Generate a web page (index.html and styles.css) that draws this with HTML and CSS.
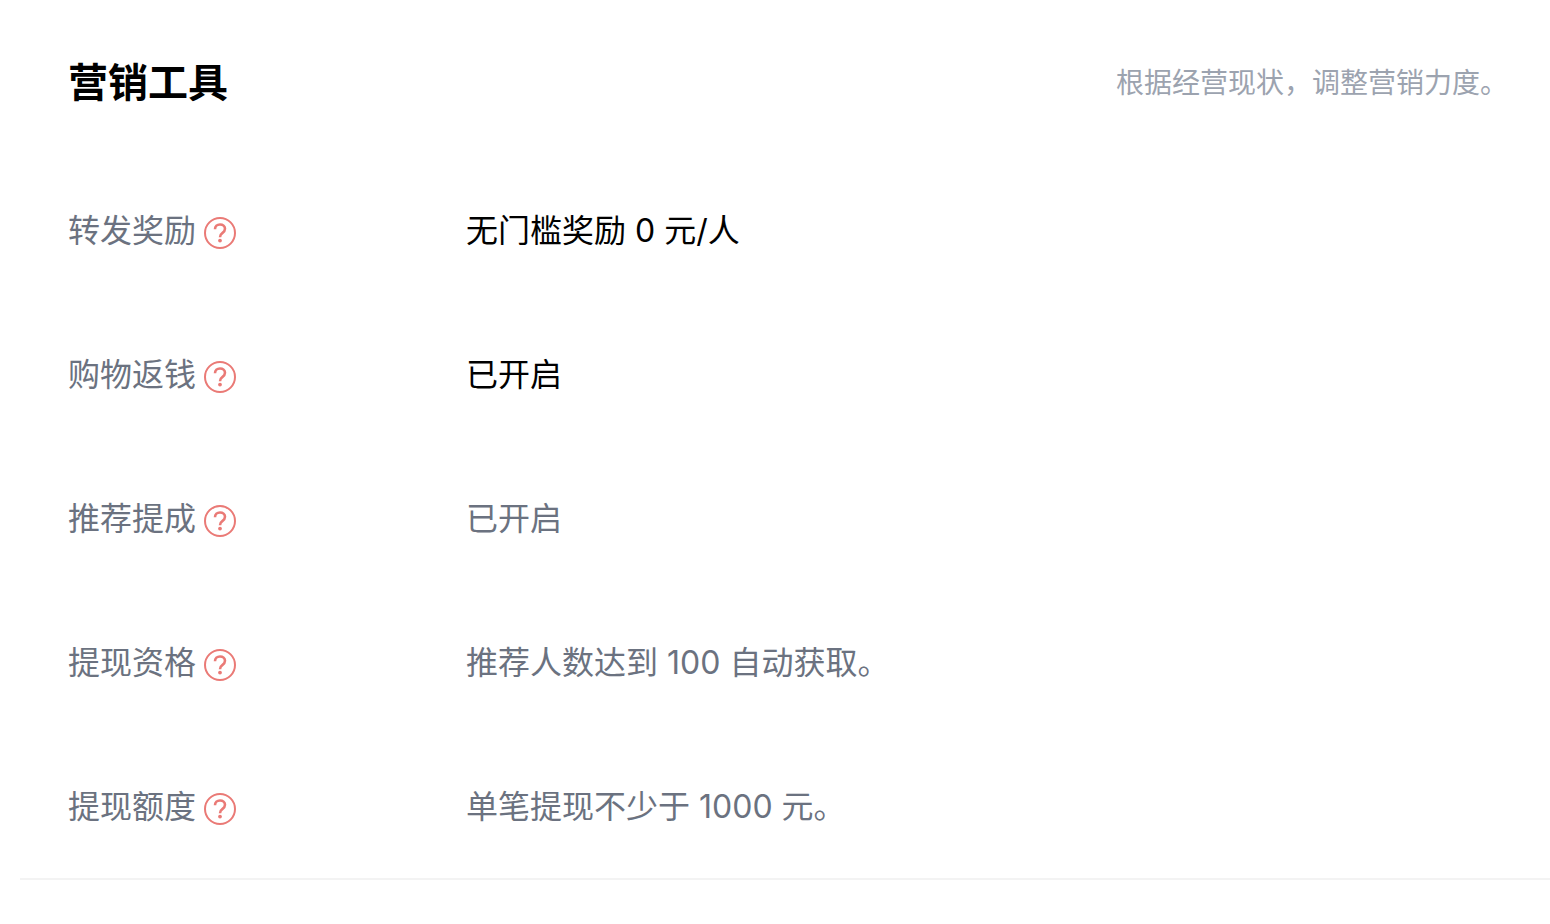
FILE: index.html
```html
<!DOCTYPE html>
<html lang="zh-CN">
<head>
<meta charset="utf-8">
<meta name="viewport" content="width=device-width, initial-scale=1">
<title>营销工具</title>
<link rel="stylesheet" href="styles.css">
</head>
<body>
<svg class="defs" aria-hidden="true">
  <symbol id="help" viewBox="0 0 32 32">
    <circle cx="16" cy="16" r="15" fill="none" stroke="currentColor" stroke-width="2"/>
    <path d="M11 12.200C11 9.200 13.100 7.500 16 7.500s5 1.700 5 4.300c0 2.100-1.100 3.200-2.700 4.300C16.700 17.200 16 18.100 16 20.200" fill="none" stroke="currentColor" stroke-width="2.600"/>
    <circle cx="16" cy="23.600" r="1.900" fill="currentColor"/>
  </symbol>
</svg>
<main class="panel">
  <header class="panel-header">
    <h1 class="title">营销工具</h1>
    <p class="hint">根据经营现状，调整营销力度。</p>
  </header>
  <dl class="settings">
    <div class="row">
      <dt class="label">转发奖励<button class="help" type="button" aria-label="转发奖励说明"><svg class="help-icon"><use href="#help"/></svg></button></dt>
      <dd class="value value-active">无门槛奖励 0 元/人</dd>
    </div>
    <div class="row">
      <dt class="label">购物返钱<button class="help" type="button" aria-label="购物返钱说明"><svg class="help-icon"><use href="#help"/></svg></button></dt>
      <dd class="value value-active">已开启</dd>
    </div>
    <div class="row">
      <dt class="label">推荐提成<button class="help" type="button" aria-label="推荐提成说明"><svg class="help-icon"><use href="#help"/></svg></button></dt>
      <dd class="value">已开启</dd>
    </div>
    <div class="row">
      <dt class="label">提现资格<button class="help" type="button" aria-label="提现资格说明"><svg class="help-icon"><use href="#help"/></svg></button></dt>
      <dd class="value">推荐人数达到 100 自动获取。</dd>
    </div>
    <div class="row">
      <dt class="label">提现额度<button class="help" type="button" aria-label="提现额度说明"><svg class="help-icon"><use href="#help"/></svg></button></dt>
      <dd class="value">单笔提现不少于 1000 元。</dd>
    </div>
  </dl>
</main>
</body>
</html>
```

FILE: styles.css
```css
* {
  box-sizing: border-box;
}

body {
  margin: 0;
  background: #fff;
  color: #000;
  font-family: Inter, "Noto Sans CJK SC", sans-serif;
}

.defs {
  display: none;
}

.panel {
  margin-left: 20px;
  padding: 54px 42px 0 48px;
  border-bottom: 2px solid #f3f3f3;
}

.panel-header {
  display: flex;
  align-items: center;
  justify-content: space-between;
}

.title {
  margin: 0;
  font-size: 40px;
  line-height: 58px;
  font-weight: 600;
}

.hint {
  margin: 0;
  color: #9ca3af;
  font-size: 28px;
  line-height: 40px;
}

.settings {
  display: grid;
  gap: 96px;
  margin: 0;
  padding: 95px 0 47px;
}

.row {
  display: grid;
  grid-template-columns: 398px 1fr;
  align-items: center;
  font-size: 32px;
  line-height: 48px;
  color: #6b7280;
}

.label {
  display: flex;
  align-items: center;
  gap: 8px;
}

.value {
  margin: 0;
}

.value-active {
  color: #000;
}

.help {
  padding: 4px 0 0;
  border: 0;
  background: none;
  color: #ea7a76;
  cursor: pointer;
}

.help-icon {
  display: block;
  width: 32px;
  height: 32px;
}
```
